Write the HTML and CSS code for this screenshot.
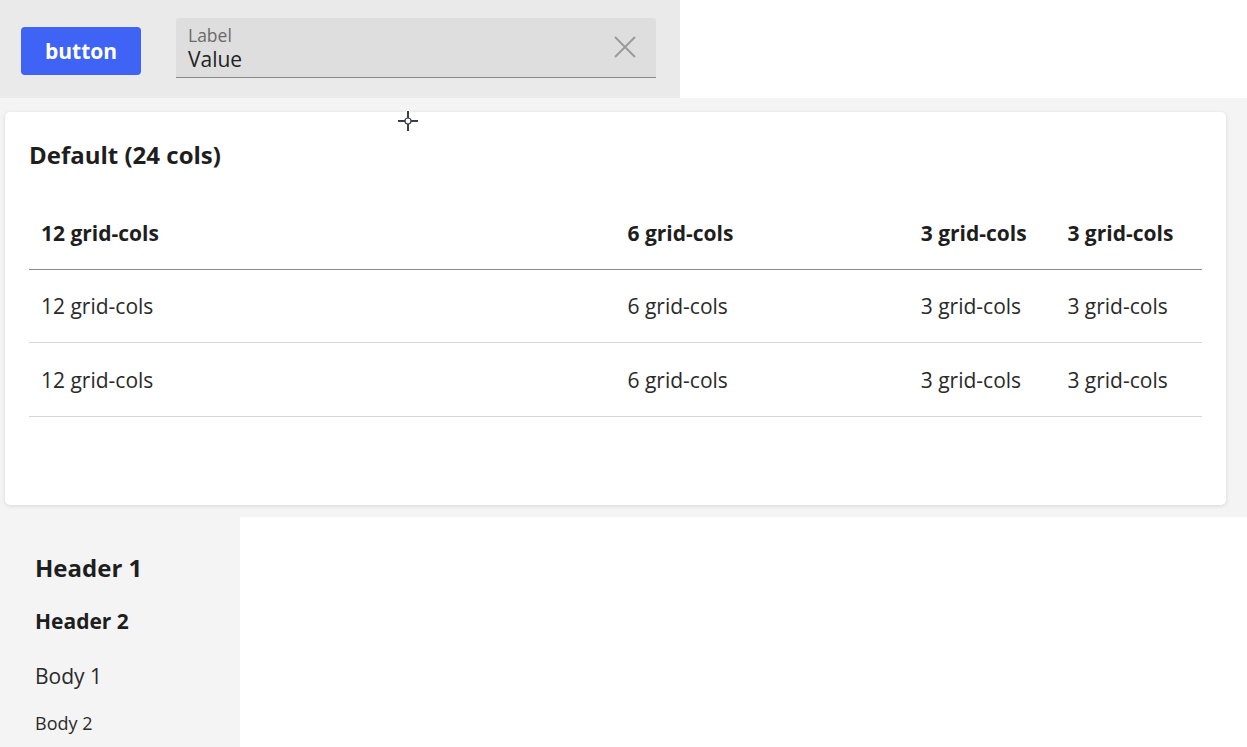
FILE: index.html
```html
<!DOCTYPE html>
<html>
<head>
<meta charset="utf-8">
<link rel="stylesheet" href="styles.css">
</head>
<body>
<div class="top">
  <div class="toolbar">
    <button class="btn">button</button>
    <div class="field">
      <div class="field-text">
        <div class="field-label">Label</div>
        <div class="field-value">Value</div>
      </div>
      <svg class="clear" width="22" height="22" viewBox="0 0 22 22"><path d="M1 1 L21 21 M21 1 L1 21" stroke="#9a9a9a" stroke-width="2" fill="none"/></svg>
    </div>
  </div>
</div>
<div class="main">
  <div class="card">
    <h2 class="card-title">Default (24 cols)</h2>
    <div class="grid">
      <div class="row head">
        <div class="c12">12 grid-cols</div><div class="c6">6 grid-cols</div><div class="c3">3 grid-cols</div><div class="c3">3 grid-cols</div>
      </div>
      <div class="row">
        <div class="c12">12 grid-cols</div><div class="c6">6 grid-cols</div><div class="c3">3 grid-cols</div><div class="c3">3 grid-cols</div>
      </div>
      <div class="row">
        <div class="c12">12 grid-cols</div><div class="c6">6 grid-cols</div><div class="c3">3 grid-cols</div><div class="c3">3 grid-cols</div>
      </div>
    </div>
  </div>
  <svg class="cursor" width="24" height="24" viewBox="0 0 24 24">
    <path d="M12 1 V23 M1 12 H23" stroke="#fff" stroke-width="4"/>
    <path d="M12 2 V22 M2 12 H22" stroke="#3a3d4a" stroke-width="2"/>
    <circle cx="12" cy="12" r="3" fill="#fff" stroke="#3a3d4a" stroke-width="1.2"/>
  </svg>
</div>
<div class="bottom">
  <div class="type">
    <div class="h1">Header 1</div>
    <div class="h2">Header 2</div>
    <div class="b1">Body 1</div>
    <div class="b2">Body 2</div>
  </div>
</div>
</body>
</html>
```
FILE: styles.css
```css
html, body {
  margin: 0;
  padding: 0;
  background: #ffffff;
  font-family: "Open Sans", "Noto Sans", sans-serif;
  color: #222;
}
.top {
  display: flex;
}
.toolbar {
  width: 680px;
  height: 98px;
  box-sizing: border-box;
  background: #eaeaea;
  display: flex;
  align-items: flex-start;
  padding-left: 21px;
  gap: 35px;
}
.btn {
  margin-top: 27px;
  width: 120px;
  height: 48px;
  border: none;
  border-radius: 4px;
  background: #3f63f4;
  color: #fff;
  font-family: "Open Sans", sans-serif;
  font-weight: 700;
  font-size: 21px;
  padding: 0;
}
.field {
  margin-top: 18px;
  width: 480px;
  height: 60px;
  box-sizing: border-box;
  background: #dedede;
  border-bottom: 1px solid #8a8a8a;
  border-radius: 3px 3px 0 0;
  display: flex;
  align-items: center;
  justify-content: space-between;
  padding: 0 20px 0 12px;
}
.field-text {
  margin-top: 2px;
}
.field-label {
  font-size: 17.5px;
  line-height: 20px;
  color: #6a6a6a;
}
.field-value {
  font-size: 21px;
  line-height: 28px;
  color: #222;
}
.clear {
  margin-top: -2px;
}
.main {
  position: relative;
  background: #f4f4f4;
  padding: 14px 21px 12px 5px;
}
.card {
  background: #fff;
  border-radius: 5px;
  box-shadow: 0 1px 4px rgba(0,0,0,0.12);
  height: 393px;
  box-sizing: border-box;
  padding: 28px 24px 0 24px;
}
.card-title {
  margin: 0;
  font-size: 24px;
  line-height: 30px;
  font-weight: 700;
  color: #1e1e1e;
}
.grid {
  margin-top: 26px;
}
.row {
  display: grid;
  grid-template-columns: 12fr 6fr 3fr 3fr;
  height: 73px;
  box-sizing: border-box;
  border-bottom: 1px solid #d6d6d6;
  align-items: center;
  font-size: 21px;
  color: #2a2a2a;
}
.row:last-child {
  height: 74px;
}
.row > div {
  padding-left: 12px;
}
.row.head {
  height: 74px;
  border-bottom: 1px solid #8a8a8a;
  font-weight: 700;
  font-size: 21px;
  color: #1e1e1e;
}
.cursor {
  position: absolute;
  left: 396px;
  top: 11px;
}
.bottom {
  width: 240px;
  height: 230px;
  background: #f4f4f4;
}
.type {
  padding: 36px 0 0 35px;
  color: #1e1e1e;
}
.h1 {
  font-size: 24px;
  font-weight: 700;
  line-height: 30px;
}
.h2 {
  margin-top: 23px;
  font-size: 21px;
  font-weight: 700;
  line-height: 30px;
}
.b1 {
  margin-top: 25px;
  font-size: 21px;
  line-height: 30px;
  color: #2a2a2a;
}
.b2 {
  margin-top: 20px;
  font-size: 18px;
  line-height: 24px;
  color: #2a2a2a;
}
```
